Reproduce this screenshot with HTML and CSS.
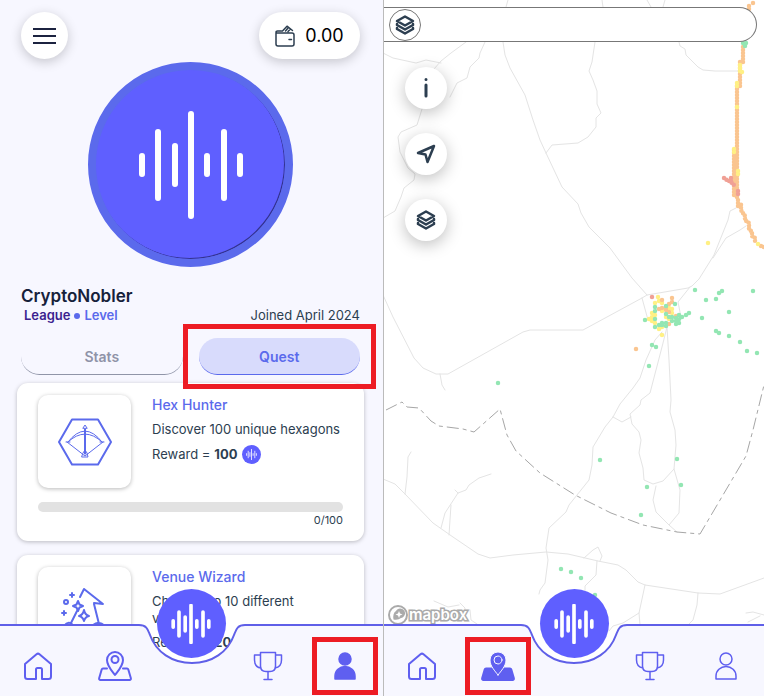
FILE: index.html
```
<!DOCTYPE html>
<html lang="en">
  <head>
    <meta charset="UTF-8" />
    <meta name="viewport" content="width=device-width, initial-scale=1.0" />
    <title>Quests and map</title>
    <link rel="stylesheet" href="styles.css">
  </head>
  <body>
    <!-- shared icons -->
    <svg class="sprite" aria-hidden="true">
      <symbol id="wave" viewBox="0 0 110 110">
        <path d="M6 46v18M22 22v66M39 36v38M55 4v102M71 46v18M88 22v66M104 46v18" />
      </symbol>
      <symbol id="layers" viewBox="0 0 20 20">
        <path d="M10 1.500L18 6L10 10.500L2 6ZM2 9V10L10 14.500L18 10V9M2 13V14L10 18.500L18 14V13" />
      </symbol>
      <symbol id="home" viewBox="0 0 28 28">
        <path d="M1 12L12.500 2.200Q14 1 15.500 2.200L27 12V24.500Q27 27 24.500 27H18V17.500Q18 16 16.500 16H13.500Q12 16 12 17.500V27H3.500Q1 27 1 24.500Z" />
      </symbol>
      <symbol id="map-pin" viewBox="0 0 34 30">
        <path d="M9 17.500H5Q4 17.500 3.700 18.500L1.200 27Q.8 29 2.500 29H31.500Q33.200 29 32.800 27L30.300 18.500Q30 17.500 29 17.500H25M17 24C14 20 9 15 9 9A8 8 0 0 1 25 9C25 15 20 20 17 24Z" />
        <circle cx="17" cy="8.500" r="3.500" />
      </symbol>
      <symbol id="cup" viewBox="0 0 30 30">
        <path d="M7.500 1.500H22.500V15Q22.500 20.500 17 20.500H13Q7.500 20.500 7.500 15ZM7.500 4H1.500V9Q1.500 16 8 17M22.500 4H28.500V9Q28.500 16 22 17M15 21V28.500M11 28.500H19" />
      </symbol>
      <symbol id="person" viewBox="0 0 22 28">
        <circle cx="11" cy="7" r="6" />
        <path d="M1 27V24A10 9.500 0 0 1 21 24V27Z" />
      </symbol>
    </svg>

    <section class="screen profile">
      <header class="topbar">
        <button class="menu" aria-label="Menu"><span></span><span></span><span></span></button>
        <button class="wallet">
          <svg viewBox="0 0 20 22" aria-hidden="true">
            <path d="M6.500 6H2.500Q1 6 1 7.500V19Q1 21 3 21H17Q19 21 19 19V10Q19 8 17 8H2.500Q1 8 1 6.700M7.500 6L12 1.200L17.500 5.500M10.500 6L13 3M13 6.500L15.500 4M14 14.500H16.500" />
          </svg>
          0.00
        </button>
      </header>

      <div class="avatar"><svg><use href="#wave" /></svg></div>

      <div class="user">
        <h1>CryptoNobler</h1>
        <p class="rank"><b>League</b> <i></i> <span>Level</span></p>
        <p class="joined">Joined April 2024</p>
      </div>

      <div class="tabs">
        <div class="tab"><button>Stats</button></div>
        <div class="tab marked"><button class="on">Quest</button></div>
      </div>

      <main class="quests">
        <article class="card">
          <div class="tile">
            <svg class="hex" viewBox="0 0 54 48" aria-hidden="true">
              <path class="thick" d="M14 1.500H40L53 24L40 46.500H14L1 24Z" />
              <path d="M10 24Q27 2 44 24M10 24Q27 8 44 24M9 24L27 38L45 24M8 24H12M42 24H46M26.500 11V36M27.500 11V36M25 10L27 7L29 10ZM25 35L27 32L29 35L30 39H24Z" />
            </svg>
          </div>
          <div class="info">
            <h2>Hex Hunter</h2>
            <p>Discover 100 unique hexagons</p>
            <p class="reward">Reward = <b>100</b> <span class="coin"><svg><use href="#wave" /></svg></span></p>
          </div>
          <div class="progress">
            <progress value="0" max="100" aria-label="Hex Hunter progress"></progress>
            <span>0/100</span>
          </div>
        </article>

        <article class="card">
          <div class="tile">
            <svg class="hat" viewBox="0 0 50 54" aria-hidden="true">
              <path class="thick" d="M10 38L17 24M20 10L24 2L43 17L34 16M34 17L39 37M4 39Q9 33 13 38M33 38Q39 33 45 39" />
              <path class="thick" d="M24 23Q25 28 29 29Q25 30 24 34Q23 30 19 29Q23 28 24 23ZM18 14L19.500 17.500L23 19L19.500 20.500L18 24L16.500 20.500L13 19L16.500 17.500ZM12 6V10M10 8H14M4 24V28M2 26H6" />
              <circle class="thick" cx="6" cy="15" r="2" />
            </svg>
          </div>
          <div class="info">
            <h2>Venue Wizard</h2>
            <p>Check in to 10 different<br>venues</p>
            <p class="reward">Reward = <b>200</b></p>
          </div>
        </article>
      </main>

      <nav class="nav" aria-label="Profile">
        <div class="nav-shape" aria-hidden="true">
          <span></span>
          <svg viewBox="0 0 106 72"><path class="fill" d="M0 1C8 1 9 6 11 11C17 28 33 39 53 39S89 28 95 11C97 6 98 1 106 1V72H0Z" /><path class="edge" d="M0 1C8 1 9 6 11 11C17 28 33 39 53 39S89 28 95 11C97 6 98 1 106 1" /></svg>
          <span></span>
        </div>
        <a href="#home" aria-label="Home"><svg class="home"><use href="#home" /></svg></a>
        <a href="#map" aria-label="Map"><svg class="pin"><use href="#map-pin" /></svg></a>
        <button class="record" aria-label="Measure noise"><svg><use href="#wave" /></svg></button>
        <a href="#ranking" aria-label="Ranking"><svg class="cup"><use href="#cup" /></svg></a>
        <a class="marked" href="#profile" aria-label="Profile"><svg class="person solid"><use href="#person" /></svg></a>
      </nav>
    </section>

    <section class="screen map">
      <svg class="canvas" viewBox="1 0 380 696" preserveAspectRatio="xMidYMid slice" aria-hidden="true">
        <g class="roads">
          <path d="M125 0L123 7M219 0L220 7M264 0L268 7M282 0L280 7" />
          <path d="M0 53L10 58L33 63L43 60L58 63M83 42L68 53L58 61L51 69L39 109L34 125L18 132L15 137L17 152L25 168L32 174L31 180L21 188L18 197L12 211L0 218" />
          <path d="M102 42L97 53L96 58L87 67L84 78L74 83L67 97" />
          <path d="M120 42L122 55L127 68L142 95L150 120L157 140L163 153L179 187L195 204L198 213L206 227L227 248L249 278L264 295" />
          <path d="M212 42L209 62L206 71L210 80L214 91L214 104L218 113L213 118V127L205 137L195 143L169 145L163 153" />
          <path d="M296 42L297 46L302 49L303 55L315 67L320 70L332 71H357" />
          <path d="M353 208L347 211L345 220L331 255L316 279L309 286L305 288L264 295L259 298L200 330H147L140 332L65 374H53L40 368L31 358L10 317L0 295" />
          <path d="M330 258L343 238L357 230L363 226M259 298L265 320M307 287L295 302L298 317M57 374L59 385L62 390" />
          <path d="M279 332L272 340L263 360L257 378L250 388L237 404L230 417L222 427L210 447L209 465L206 480L186 505L183 512L166 528L163 548L165 560L162 583L157 590L156 594" />
          <path d="M284 327L279 347L267 393L258 400L257 405L247 414L249 424L256 432L258 440L256 453L260 468L261 480L270 484L280 481L291 469M230 417L239 422L248 417" />
          <path d="M284 327L286 360L288 400L287 412L292 430L293 445L291 469L297 490L296 513L286 525L294 532M273 486L270 500L273 512L286 525" />
          <path d="M0 479L12 484L22 494L50 523L70 537L95 554L107 558L130 555L163 552L185 554L215 561L235 565L243 570L255 582L262 585L315 593L337 594L381 578" />
          <path d="M22 494L24 477L25 457L28 452M58 528L62 513L75 493L83 490L86 485L96 478L108 474M72 490L75 493M66 535L68 505" />
          <path d="M201 558L210 550L215 547L219 556L217 561M214 561L213 575L202 586V592M262 585L256 613L257 625M256 613L240 623L230 626L226 631M315 593L314 605L310 620L306 624M381 615L370 612L363 613M377 616L365 622M51 601L65 607L76 605M77 603L82 608L81 620M87 610L88 620L94 624" />
        </g>
        <path class="border" d="M3 410L19 402L24 407L36 408L48 421L56 426L80 429L91 432L117 409L124 435L133 451L157 473L192 495L228 513L260 525L294 532L317 534L363 456L370 430L381 385" />

        <!-- measured tracks along the main road -->
        <g class="track">
          <path class="orange" d="M366 9V3M370 3V1M360 47V65M357 62V88M354 86V200M351 150V198M355 200V207L358 204V210L362 216V220L366 223V229L369 232V236L372 238V242M378 246L381 247" />
          <path class="green" d="M360 43H364M362 46H364" />
          <path class="yellow" d="M357 65V72L360 72M354 83V89M354 107V108M351 149V155M355 171V177M375 244H376" />
          <path class="red" d="M341 178L344 180L348 182L351 185M348 178V182M355 191V196" />
        </g>
        <g class="dots">
          <path class="yellow" d="M325 243h0M275 297h0M276 301h0M272 303h0M279 303h0M279 311h0M269 313h0M272 315h0M269 317h0M266 319h0M269 321h0M272 323h0M276 329h0M279 327h0M279 335h0M283 317h0M289 309h0M289 313h0M286 308h0M286 319h0" />
          <path class="orange" d="M253 349h0M279 300h0M289 298h0M289 302h0M286 304h0M283 308h0M279 308h0M276 309h0M283 310h0M286 312h0M293 316h0M286 324h0" />
          <path class="red" d="M269 297h0" />
          <path class="green" d="M312 290h0M323 300h0M333 299h0M336 293h0M339 291h0M370 291h0M346 312h0M319 318h0M333 331h0M336 333h0M346 336h0M357 342h0M364 351h0M374 353h0M269 345h0M273 347h0M266 366h0M292 304h0M262 320h0" />
          <path class="green" d="M306 313h0M303 315h0M299 317h0M296 315h0M296 319h0M293 321h0M289 317h0M289 321h0M293 318h0M296 323h0M293 324h0M286 317h0M283 314h0M272 307h0M272 311h0M283 306h0M272 319h0M272 327h0M276 325h0M279 323h0M283 323h0M283 326h0M279 325h0" />
          <path class="green" d="M115 383h0M217 460h0M264 487h0M258 515h0M294 459h0M298 485h0M178 569h0M188 572h0M198 578h0M212 595h0" />
        </g>
      </svg>

      <form class="search">
        <button class="round" type="button" aria-label="Layers"><svg class="layers"><use href="#layers" /></svg></button>
        <input type="search" aria-label="Search the map" />
      </form>

      <div class="tools">
        <button aria-label="Information">
          <svg class="layers" viewBox="0 0 20 20"><path class="stem" d="M10 1.500V1.600M10 7V18" /></svg>
        </button>
        <button aria-label="My location">
          <svg class="layers" viewBox="0 0 20 20"><path d="M18 2L2 9L9.500 10.500L11.500 18Z" /></svg>
        </button>
        <button aria-label="Map layers"><svg class="layers"><use href="#layers" /></svg></button>
      </div>

      <a class="mapbox" href="#mapbox">
        <svg viewBox="0 0 22 22" aria-hidden="true">
          <circle cx="11" cy="11" r="9" />
          <path d="M6.500 15.500Q5.500 9 9 7A4.800 4.800 0 1 1 14 14Q11 16.500 6.500 15.500Z" />
          <path class="star" d="M12 7L13 9.500L15.500 10.500L13 11.500L12 14L11 11.500L8.500 10.500L11 9.500Z" />
        </svg>
        mapbox
      </a>

      <nav class="nav" aria-label="Map">
        <div class="nav-shape" aria-hidden="true">
          <span></span>
          <svg viewBox="0 0 106 72"><path class="fill" d="M0 1C8 1 9 6 11 11C17 28 33 39 53 39S89 28 95 11C97 6 98 1 106 1V72H0Z" /><path class="edge" d="M0 1C8 1 9 6 11 11C17 28 33 39 53 39S89 28 95 11C97 6 98 1 106 1" /></svg>
          <span></span>
        </div>
        <a href="#home" aria-label="Home"><svg class="home"><use href="#home" /></svg></a>
        <a class="marked" href="#map" aria-label="Map">
          <svg class="pin" viewBox="0 0 34 30">
            <path class="body" d="M7 17.500H5Q4 17.500 3.700 18.500L1.200 27Q.8 29 2.500 29H31.500Q33.200 29 32.800 27L30.300 18.500Q30 17.500 29 17.500H27Z" />
            <path class="halo" d="M17 24C14 20 9 15 9 9A8 8 0 0 1 25 9C25 15 20 20 17 24Z" />
            <circle class="halo" cx="17" cy="9" r="4" />
          </svg>
        </a>
        <button class="record" aria-label="Measure noise"><svg><use href="#wave" /></svg></button>
        <a href="#ranking" aria-label="Ranking"><svg class="cup"><use href="#cup" /></svg></a>
        <a href="#profile" aria-label="Profile"><svg class="person"><use href="#person" /></svg></a>
      </nav>
    </section>
  </body>
</html>
```
FILE: styles.css
```
* {
  box-sizing: border-box;
}
body {
  margin: 0;
  min-height: 100vh;
  display: grid;
  grid-template-columns: 383fr 381fr;
  font-family: Inter, "Liberation Sans", sans-serif;
  font-size: 13px;
  line-height: 17px;
  color: #2c3e50;
}
h1,
h2,
p {
  margin: 0;
}
button {
  font: inherit;
  color: inherit;
  border: 0;
  padding: 0;
  cursor: pointer;
}
svg {
  fill: none;
  stroke: currentColor;
  stroke-width: 2;
  stroke-linecap: round;
  stroke-linejoin: round;
}
symbol {
  overflow: visible;
}
.sprite {
  position: absolute;
  width: 0;
  height: 0;
}
.screen {
  position: relative;
  height: 100vh;
  overflow: hidden;
}

/* profile */
.profile {
  background: #f7f7ff;
  padding: 12px 19px 0 17px;
}
.topbar {
  display: flex;
  justify-content: space-between;
  padding: 0 4px;
}
.menu,
.wallet {
  height: 47px;
  border-radius: 24px;
  background: #fff;
  box-shadow: 0 3px 12px rgba(0, 0, 0, 0.2);
}
.menu {
  width: 47px;
  display: flex;
  flex-direction: column;
  align-items: center;
  justify-content: center;
  gap: 5px;
}
.menu span {
  width: 23px;
  height: 2px;
  background: #1c2340;
}
.wallet {
  width: 101px;
  display: flex;
  align-items: center;
  justify-content: center;
  gap: 10px;
  font-size: 18px;
  color: #000;
}
.wallet svg {
  width: 20px;
  height: 22px;
  color: #2c3e50;
  stroke-width: 1.500;
}
.avatar {
  width: 205px;
  height: 205px;
  margin: 3px auto 0;
  border: 8px solid #5b6aec;
  border-radius: 50%;
  background: #5f5fff;
  box-shadow: inset -1px -1px 0 #33338f;
  display: flex;
  align-items: center;
  justify-content: center;
}
.avatar svg {
  width: 110px;
  height: 110px;
  color: #fff;
  stroke-width: 6;
}
.user {
  display: grid;
  grid-template-columns: 1fr auto;
  padding: 0 4px;
  margin-top: 19px;
}
.user h1 {
  grid-column: 1 / 3;
  font-size: 17px;
  line-height: 21px;
  font-weight: 600;
  color: #16213a;
}
.rank {
  display: flex;
  align-items: center;
  gap: 4px;
  padding-left: 3px;
  font-weight: 600;
  color: #5b6aec;
}
.rank b {
  font-weight: 600;
  color: #3c1f8f;
}
.rank i {
  width: 6px;
  height: 6px;
  border-radius: 50%;
  background: #5b6aec;
}
.tabs {
  display: grid;
  grid-template-columns: 1fr 1fr;
  gap: 16px;
  padding: 0 4px;
  margin-top: 14px;
}
.tab {
  position: relative;
}
.tab button {
  width: 100%;
  height: 37px;
  border-bottom: 1px solid #9095a8;
  border-radius: 19px;
  background: transparent;
  font-size: 14px;
  font-weight: 600;
  color: #8f93a8;
}
.tab .on {
  background: #d8dbfc;
  border-color: #5b6aec;
  color: #5b6aec;
}
.tab.marked::after {
  content: "";
  position: absolute;
  z-index: 1;
  inset: -14px -16px;
  border: 5px solid #ed1c24;
  pointer-events: none;
}
.quests {
  display: grid;
  gap: 14px;
  margin-top: 8px;
}
.card {
  display: grid;
  grid-template-columns: 93px 1fr;
  column-gap: 21px;
  min-height: 158px;
  padding: 12px 21px;
  border-radius: 11px;
  background: #fff;
  box-shadow: 0 1px 4px rgba(0, 0, 0, 0.25);
}
.tile {
  height: 93px;
  display: grid;
  place-items: center;
  border-radius: 10px;
  color: #5b6aec;
  box-shadow: 0 1px 4px rgba(0, 0, 0, 0.28);
}
.tile svg {
  stroke-width: 1;
}
.tile .thick {
  stroke-width: 2;
}
.hex {
  width: 54px;
  height: 48px;
}
.hat {
  width: 50px;
  height: 54px;
}
.info {
  display: flex;
  flex-direction: column;
  gap: 7px;
  padding-top: 1px;
}
.info h2 {
  font-size: 14px;
  line-height: 18px;
  font-weight: 500;
  color: #5b6aec;
}
.reward {
  display: flex;
  align-items: center;
  gap: 4px;
}
.coin {
  width: 19px;
  height: 19px;
  border-radius: 50%;
  background: #5f5fff;
  color: #fff;
  display: grid;
  place-items: center;
}
.coin svg {
  width: 11px;
  height: 11px;
  stroke-width: 8;
}
.progress {
  grid-column: 1 / 3;
  padding-top: 14px;
  font-size: 11px;
  text-align: right;
}
.progress progress {
  display: block;
  width: 100%;
  height: 10px;
  appearance: none;
  border: 0;
}
.progress progress::-webkit-progress-bar {
  background: #e2e2e2;
  border-radius: 5px;
}
.progress progress::-webkit-progress-value {
  background: #5f5fff;
  border-radius: 5px;
}

/* map */
.map {
  background: #fff;
  border-left: 1px solid #bbb;
  padding-top: 7px;
}
.canvas {
  position: absolute;
  top: 0;
  left: 0;
  width: 100%;
  height: 100%;
}
.roads {
  color: #e4e4e4;
  stroke-width: 1;
}
.border {
  stroke: #a6a6a6;
  stroke-width: 1;
  stroke-linecap: butt;
  stroke-dasharray: 12 4 4 4;
}
.track {
  stroke-width: 4.500;
  stroke-dasharray: 0 3;
}
.dots {
  stroke-width: 4.500;
}
.green {
  stroke: #93e6b3;
}
.yellow {
  stroke: #fff084;
}
.orange {
  stroke: #fac590;
}
.red {
  stroke: #f0a095;
}
.search {
  position: relative;
  display: flex;
  align-items: center;
  height: 35px;
  margin-right: 7px;
  padding-left: 5px;
  border: 1px solid #777;
  border-left: 0;
  border-radius: 0 18px 18px 0;
  background: #fff;
}
.search input {
  flex: 1;
  border: 0;
  outline: 0;
  margin-right: 18px;
  background: transparent;
  font: inherit;
}
.round {
  width: 32px;
  height: 32px;
  border: 1px solid #777;
  border-radius: 50%;
  background: #fff;
  display: grid;
  place-items: center;
}
.layers {
  width: 20px;
  height: 20px;
  color: #2c3e50;
  stroke-width: 2.500;
}
.tools {
  position: relative;
  display: flex;
  flex-direction: column;
  gap: 24px;
  width: 42px;
  margin: 25px 0 0 21px;
}
.tools button {
  width: 42px;
  height: 42px;
  border-radius: 50%;
  background: #fff;
  box-shadow: 0 4px 16px rgba(0, 0, 0, 0.25);
  display: grid;
  place-items: center;
}
.stem {
  stroke-width: 3;
}
.mapbox {
  position: absolute;
  left: 3px;
  bottom: 70px;
  display: flex;
  align-items: center;
  font-size: 15px;
  line-height: 22px;
  font-weight: 600;
  color: #fff;
  text-decoration: none;
  -webkit-text-stroke: 3px #aaa;
  paint-order: stroke fill;
}
.mapbox svg {
  width: 22px;
  height: 22px;
  color: #aaa;
}
.mapbox path {
  fill: #aaa;
  stroke: none;
}
.mapbox .star {
  fill: #fff;
}

/* bottom navigation */
.nav {
  position: absolute;
  left: 0;
  right: 0;
  bottom: 0;
  display: grid;
  grid-template-columns: repeat(5, 1fr);
  justify-items: center;
  height: 72px;
  padding-top: 13px;
  color: #5f5ff0;
}
.nav-shape {
  position: absolute;
  inset: 0;
  display: flex;
}
.nav-shape span {
  flex: 1;
  background: #f7f7ff;
  border-top: 2px solid #5f5fe8;
}
.nav-shape svg {
  width: 106px;
  height: 72px;
}
.nav-shape .fill {
  fill: #f7f7ff;
  stroke: none;
}
.nav-shape .edge {
  stroke: #5f5fe8;
  stroke-linecap: butt;
}
.nav a {
  position: relative;
  width: 66px;
  height: 58px;
  display: grid;
  place-items: center;
  border: 5px solid transparent;
  color: inherit;
}
.nav .marked {
  border-color: #ed1c24;
}
.home {
  width: 28px;
  height: 28px;
}
.pin {
  width: 34px;
  height: 30px;
}
.cup {
  width: 30px;
  height: 30px;
  stroke-width: 1.500;
}
.person {
  width: 22px;
  height: 28px;
  stroke-width: 1.500;
}
.solid,
.pin .body,
.pin .halo {
  fill: currentColor;
}
.pin .halo {
  stroke: #f7f7ff;
  stroke-width: 1;
}
.record {
  position: relative;
  width: 69px;
  height: 69px;
  margin-top: -48px;
  border-radius: 50%;
  background: #5f5fff;
  color: #fff;
  display: grid;
  place-items: center;
}
.record svg {
  width: 40px;
  height: 40px;
  stroke-width: 10;
}
```
